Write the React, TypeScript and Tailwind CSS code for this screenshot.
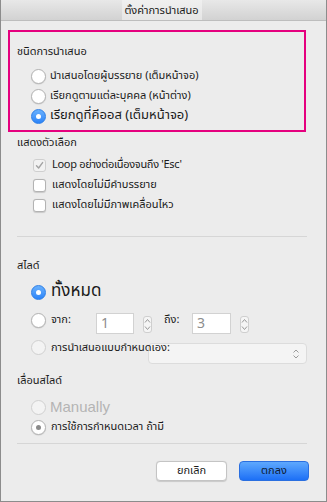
const FONT = "font-['Noto_Sans_Thai','Noto_Sans','DejaVu_Sans',sans-serif]";

function Radio({ checked, disabled, dot }: { checked?: boolean; disabled?: boolean; dot?: boolean }) {
  if (checked) {
    return (
      <span className="w-[15px] h-[15px] shrink-0 rounded-full bg-gradient-to-b from-[#69b1fd] to-[#2a83f8] border border-[#2c7ee6] flex items-center justify-center">
        <span className="w-[5px] h-[5px] rounded-full bg-white" />
      </span>
    );
  }
  return (
    <span
      className={`w-[15px] h-[15px] shrink-0 rounded-full flex items-center justify-center ${
        disabled ? "bg-[#f3f3f3] border border-[#d0d0d0]" : "bg-white border border-[#b3b3b3] shadow-[0_0.5px_1px_rgba(0,0,0,0.15)]"
      }`}
    >
      {dot && <span className="w-[5px] h-[5px] rounded-full bg-[#8a8a8a]" />}
    </span>
  );
}

function Check({ checked }: { checked?: boolean }) {
  return (
    <span
      className={`w-[13px] h-[13px] shrink-0 rounded-[3px] border flex items-center justify-center ${
        checked ? "bg-[#f2f2f2] border-[#cfcfcf]" : "bg-white border-[#b3b3b3] shadow-[0_0.5px_1px_rgba(0,0,0,0.15)]"
      }`}
    >
      {checked && (
        <svg width="9" height="9" viewBox="0 0 9 9" fill="none">
          <path d="M1.5 4.8 L3.6 7 L7.6 1.6" stroke="#a3a3a3" strokeWidth="1.4" strokeLinecap="round" strokeLinejoin="round" />
        </svg>
      )}
    </span>
  );
}

function Stepper() {
  return (
    <span className="w-[9px] h-[17px] rounded-[3px] border border-[#cfcfcf] bg-[#f5f5f5] flex flex-col items-center justify-center gap-[1px]">
      <svg width="7" height="6" viewBox="0 0 7 6" fill="none">
        <path d="M1 4.5 L3.5 1.5 L6 4.5" stroke="#9a9a9a" strokeWidth="1" />
      </svg>
      <svg width="7" height="6" viewBox="0 0 7 6" fill="none">
        <path d="M1 1.5 L3.5 4.5 L6 1.5" stroke="#9a9a9a" strokeWidth="1" />
      </svg>
    </span>
  );
}

export default function App() {
  return (
    <div className={`w-[327px] h-[502px] bg-[#ececec] border-l border-r border-b border-[#8c8c8c] flex flex-col text-[#1a1a1a] ${FONT}`}>
      {/* title bar */}
      <div className="h-[21px] shrink-0 bg-gradient-to-b from-[#e8e8e8] to-[#d2d2d2] border-b border-[#bdbdbd] flex justify-center">
        <div className="w-[80px] h-full bg-gradient-to-b from-[#f0f0f0] to-[#e6e6e6] flex items-center justify-center text-[11px] leading-none whitespace-nowrap -ml-[4px]">
          ตั้งค่าการนำเสนอ
        </div>
      </div>

      {/* presentation type, highlighted */}
      <div className="ml-[7px] mt-[9px] w-[298px] h-[102px] border-2 border-[#e5007e] pl-[7px] pt-[12px]">
        <div className="h-[16px] flex items-center text-[11px]">ชนิดการนำเสนอ</div>
        <div className="mt-[6px] ml-[14px] flex flex-col">
          <label className="h-[20px] flex items-center gap-[4px] text-[11px]">
            <Radio />
            นำเสนอโดยผู้บรรยาย (เต็มหน้าจอ)
          </label>
          <label className="h-[20px] flex items-center gap-[4px] text-[11px]">
            <Radio />
            เรียกดูตามแต่ละบุคคล (หน้าต่าง)
          </label>
          <label className="h-[20px] flex items-center gap-[4px] text-[13px]">
            <Radio checked />
            เรียกดูที่คีออส (เต็มหน้าจอ)
          </label>
        </div>
      </div>

      {/* options */}
      <div className="ml-[16px] mt-[3px] h-[16px] flex items-center text-[11px]">แสดงตัวเลือก</div>
      <div className="ml-[32px] mt-[4px] flex flex-col text-[11px]">
        <label className="h-[20px] flex items-center gap-[6px]">
          <Check checked />
          <span className="tracking-[-0.3px]">Loop อย่างต่อเนื่องจนถึง 'Esc'</span>
        </label>
        <label className="h-[20px] flex items-center gap-[6px]">
          <Check />
          แสดงโดยไม่มีคำบรรยาย
        </label>
        <label className="h-[20px] flex items-center gap-[6px]">
          <Check />
          แสดงโดยไม่มีภาพเคลื่อนไหว
        </label>
      </div>

      <div className="ml-[16px] mt-[21px] w-[290px] h-px bg-[#d6d6d6]" />

      {/* slides */}
      <div className="ml-[16px] mt-[21px] h-[16px] flex items-center text-[11px]">สไลด์</div>
      <div className="ml-[30px] flex flex-col">
        <label className="mt-[8px] h-[20px] flex items-center gap-[5px] text-[17px]">
          <Radio checked />
          ทั้งหมด
        </label>
        <div className="mt-[8px] h-[25px] flex items-start text-[11px]">
          <span className="mt-[3px]"><Radio /></span>
          <span className="ml-[5px] mt-[2px] w-[45px]">จาก:</span>
          <span className="mt-[3px] w-[38px] h-[21px] bg-white border border-[#d2d2d2] text-[14px] text-[#8d8d8d] pl-[4px] flex items-center">1</span>
          <span className="ml-[9px] mt-[6px]"><Stepper /></span>
          <span className="ml-[12px] mt-[2px] w-[28px]">ถึง:</span>
          <span className="mt-[3px] w-[39px] h-[21px] bg-white border border-[#d2d2d2] text-[14px] text-[#8d8d8d] pl-[4px] flex items-center">3</span>
          <span className="ml-[9px] mt-[6px]"><Stepper /></span>
        </div>
        <div className="h-[29px] flex items-start text-[11px]">
          <span className="mt-[5px]"><Radio disabled /></span>
          <div className="ml-[5px] relative">
            <span className="absolute left-0 top-[5px] z-10 whitespace-nowrap">การนำเสนอแบบกำหนดเอง:</span>
            <div className="ml-[97px] mt-[8px] w-[159px] h-[21px] rounded-[4px] bg-[#f4f4f4] border border-[#dcdcdc] flex items-center justify-end pr-[6px]">
              <svg width="8" height="12" viewBox="0 0 8 12" fill="none">
                <path d="M1.5 4.5 L4 2 L6.5 4.5 M1.5 7.5 L4 10 L6.5 7.5" stroke="#9a9a9a" strokeWidth="1" />
              </svg>
            </div>
          </div>
        </div>
      </div>

      {/* advance */}
      <div className="ml-[16px] mt-[9px] h-[16px] flex items-center text-[11px]">เลื่อนสไลด์</div>
      <div className="ml-[30px] mt-[8px] flex flex-col">
        <label className="h-[20px] flex items-center gap-[4px] text-[15px] text-[#b4b4b4] font-['Liberation_Sans',sans-serif]">
          <Radio disabled />
          Manually
        </label>
        <label className="h-[20px] flex items-center gap-[5px] text-[11px]">
          <Radio dot />
          การใช้การกำหนดเวลา ถ้ามี
        </label>
      </div>

      <div className="ml-[16px] mt-[6px] w-[290px] h-px bg-[#d6d6d6]" />

      <div className="mt-[17px] pr-[17px] flex justify-end gap-[12px] text-[11px]">
        <button className="w-[71px] h-[20px] rounded-[4px] bg-white border border-[#c4c4c4] shadow-[0_0.5px_1px_rgba(0,0,0,0.15)] flex items-center justify-center">
          ยกเลิก
        </button>
        <button className="w-[70px] h-[20px] rounded-[4px] bg-gradient-to-b from-[#5ea8fd] to-[#1c6ff6] border border-[#2a6fe0] flex items-center justify-center text-[#0d1b33]">
          ตกลง
        </button>
      </div>
    </div>
  );
}
